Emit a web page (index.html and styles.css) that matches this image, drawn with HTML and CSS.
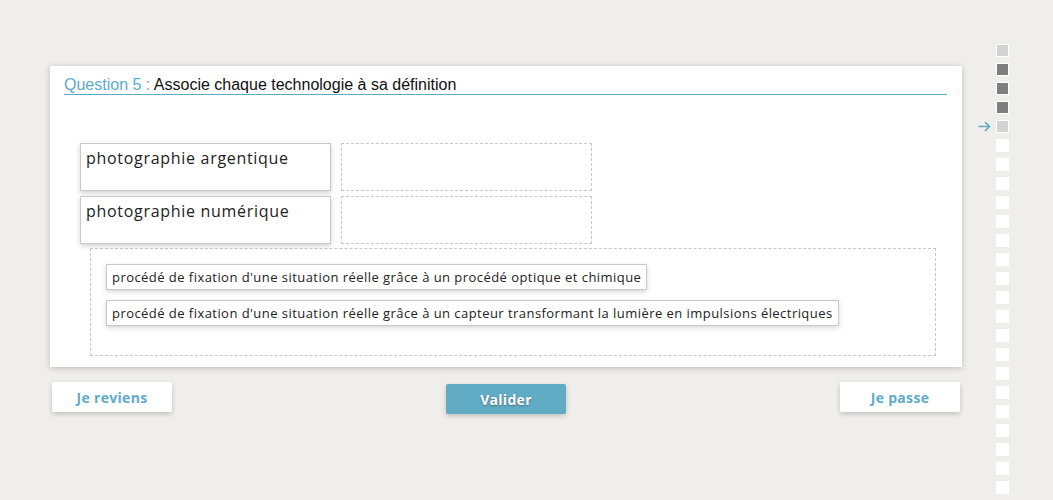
FILE: index.html
```html
<!DOCTYPE html>
<html lang="fr">
<head>
<meta charset="utf-8">
<title>Question 5</title>
<link rel="stylesheet" href="styles.css">
</head>
<body>
<div class="page">
  <main class="main">
    <section class="card">
      <h1 class="title"><span class="qnum">Question 5 : </span>Associe chaque technologie à sa définition</h1>
      <div class="pairs">
        <div class="pair">
          <div class="term">photographie argentique</div>
          <div class="drop"></div>
        </div>
        <div class="pair">
          <div class="term">photographie numérique</div>
          <div class="drop"></div>
        </div>
      </div>
      <div class="pool">
        <div class="chip">procédé de fixation d'une situation réelle grâce à un procédé optique et chimique</div>
        <div class="chip">procédé de fixation d'une situation réelle grâce à un capteur transformant la lumière en impulsions électriques</div>
      </div>
    </section>
    <nav class="actions">
      <button class="btn">Je reviens</button>
      <button class="btn btn-primary">Valider</button>
      <button class="btn">Je passe</button>
    </nav>
  </main>
  <aside class="progress">
    <div class="step"><span class="sq seen"></span></div>
    <div class="step"><span class="sq done"></span></div>
    <div class="step"><span class="sq done"></span></div>
    <div class="step"><span class="sq done"></span></div>
    <div class="step current"><svg class="arrow" width="13" height="11" viewBox="0 0 13 11"><path d="M0.5 5.5H11.5M7 1.2L11.5 5.5L7 9.8" fill="none" stroke="#62abc5" stroke-width="1.6"/></svg><span class="sq seen"></span></div>
    <div class="step"><span class="sq"></span></div>
    <div class="step"><span class="sq"></span></div>
    <div class="step"><span class="sq"></span></div>
    <div class="step"><span class="sq"></span></div>
    <div class="step"><span class="sq"></span></div>
    <div class="step"><span class="sq"></span></div>
    <div class="step"><span class="sq"></span></div>
    <div class="step"><span class="sq"></span></div>
    <div class="step"><span class="sq"></span></div>
    <div class="step"><span class="sq"></span></div>
    <div class="step"><span class="sq"></span></div>
    <div class="step"><span class="sq"></span></div>
    <div class="step"><span class="sq"></span></div>
    <div class="step"><span class="sq"></span></div>
    <div class="step"><span class="sq"></span></div>
    <div class="step"><span class="sq"></span></div>
    <div class="step"><span class="sq"></span></div>
    <div class="step"><span class="sq"></span></div>
    <div class="step"><span class="sq"></span></div>
  </aside>
</div>
</body>
</html>
```
FILE: styles.css
```css
html, body {
  margin: 0;
  padding: 0;
}
body {
  background: #efeeea;
  font-family: "Liberation Sans", Arial, sans-serif;
  height: 500px;
  overflow: hidden;
}
.page {
  display: flex;
  align-items: flex-start;
}
.main {
  width: 912px;
  margin-left: 50px;
  margin-top: 66px;
}
.card {
  background: #fff;
  box-shadow: 0 1px 6px rgba(0,0,0,0.22);
  padding: 9px 15px 11px 14px;
}
.title {
  margin: 0;
  font-weight: normal;
  font-size: 16px;
  line-height: 19px;
  color: #111;
  border-bottom: 1px solid #5aaccc;
}
.qnum {
  color: #5aaccc;
}
.pairs {
  display: flex;
  flex-direction: column;
  gap: 5px;
  margin-top: 48px;
  padding-left: 16px;
}
.pair {
  display: flex;
  gap: 10px;
}
.term, .drop {
  width: 251px;
  height: 48px;
  box-sizing: border-box;
}
.term {
  border: 1px solid #c8c8c8;
  box-shadow: 0 2px 5px rgba(0,0,0,0.18);
  font-family: "Open Sans", sans-serif;
  font-size: 16px;
  letter-spacing: 0.7px;
  color: #222;
  padding: 3px 5px;
  line-height: 22px;
}
.drop {
  border: 1px dashed #c8c8c8;
}
.pool {
  margin: 4px 11px 0 26px;
  border: 1px dashed #c8c8c8;
  padding: 15px 15px 29px;
  display: flex;
  flex-direction: column;
  align-items: flex-start;
  gap: 10px;
}
.chip {
  border: 1px solid #c8c8c8;
  box-shadow: 0 2px 5px rgba(0,0,0,0.16);
  background: #fff;
  font-family: "Open Sans", sans-serif;
  font-size: 13px;
  letter-spacing: 0.45px;
  color: #222;
  padding: 0 5px;
  line-height: 24px;
}
.actions {
  display: flex;
  justify-content: space-between;
  align-items: flex-start;
  margin: 15px 2px 0;
}
.btn {
  width: 120px;
  height: 30px;
  border: 0;
  border-radius: 2px;
  background: #fff;
  box-shadow: 0 2px 5px rgba(0,0,0,0.2);
  color: #62abc8;
  font-family: "Open Sans", sans-serif;
  font-weight: 700;
  font-size: 14px;
  letter-spacing: 0.3px;
  padding: 0;
}
.btn-primary {
  background: #62abc5;
  color: #fff;
  margin-top: 2px;
  text-shadow: 0 1px 2px rgba(0,0,0,0.35);
}
.progress {
  margin-left: 16px;
  margin-top: 44px;
  display: flex;
  flex-direction: column;
  gap: 6px;
}
.step {
  display: flex;
  align-items: center;
  justify-content: flex-end;
  width: 31px;
  height: 13px;
}
.arrow {
  display: block;
  margin-right: 5px;
}
.sq {
  width: 13px;
  height: 13px;
  box-sizing: border-box;
  border: 1px solid #fff;
  background: #fff;
}
.sq.seen {
  background: #d3d3d3;
}
.sq.done {
  background: #7f7f7f;
}
```
